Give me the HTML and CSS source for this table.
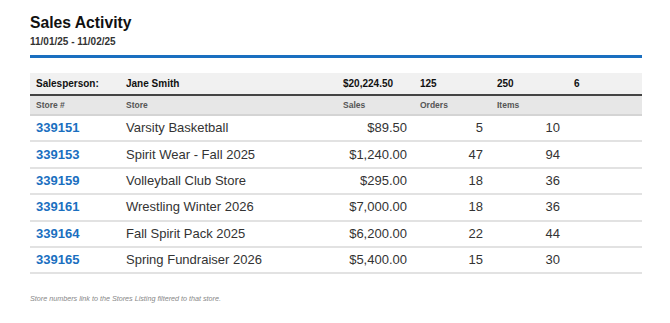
FILE: index.html
```html
<!DOCTYPE html>
<html lang="en">
<head>
<meta charset="utf-8">
<title>Sales Activity</title>
<link rel="stylesheet" href="styles.css">
</head>
<body>
<div class="page">
  <h1 class="title">Sales Activity</h1>
  <div class="range">11/01/25 - 11/02/25</div>
  <div class="rule"></div>
  <table class="report">
    <colgroup>
      <col class="c-num"><col class="c-store"><col class="c-sales"><col class="c-orders"><col class="c-items"><col class="c-extra">
    </colgroup>
    <thead>
      <tr class="summary">
        <td>Salesperson:</td>
        <td>Jane Smith</td>
        <td>$20,224.50</td>
        <td>125</td>
        <td>250</td>
        <td>6</td>
      </tr>
      <tr class="heads">
        <th>Store #</th>
        <th>Store</th>
        <th>Sales</th>
        <th>Orders</th>
        <th>Items</th>
        <th></th>
      </tr>
    </thead>
    <tbody>
      <tr><td><a href="#">339151</a></td><td>Varsity Basketball</td><td class="r sales">$89.50</td><td class="r">5</td><td class="r">10</td><td></td></tr>
      <tr><td><a href="#">339153</a></td><td>Spirit Wear - Fall 2025</td><td class="r sales">$1,240.00</td><td class="r">47</td><td class="r">94</td><td></td></tr>
      <tr><td><a href="#">339159</a></td><td>Volleyball Club Store</td><td class="r sales">$295.00</td><td class="r">18</td><td class="r">36</td><td></td></tr>
      <tr><td><a href="#">339161</a></td><td>Wrestling Winter 2026</td><td class="r sales">$7,000.00</td><td class="r">18</td><td class="r">36</td><td></td></tr>
      <tr><td><a href="#">339164</a></td><td>Fall Spirit Pack 2025</td><td class="r sales">$6,200.00</td><td class="r">22</td><td class="r">44</td><td></td></tr>
      <tr><td><a href="#">339165</a></td><td>Spring Fundraiser 2026</td><td class="r sales">$5,400.00</td><td class="r">15</td><td class="r">30</td><td></td></tr>
    </tbody>
  </table>
  <p class="note">Store numbers link to the Stores Listing filtered to that store.</p>
</div>
</body>
</html>
```
FILE: styles.css
```css
html, body {
  margin: 0;
  padding: 0;
  background: #fff;
}
body {
  font-family: "Liberation Sans", Arial, sans-serif;
  color: #222;
}
.page {
  padding: 14px 28px 0 30px;
}
.title {
  margin: 0;
  font-size: 15.7px;
  line-height: 18px;
  font-weight: bold;
  color: #111;
}
.range {
  margin-top: 4px;
  font-size: 10px;
  line-height: 12px;
  font-weight: bold;
  color: #333;
}
.rule {
  margin-top: 7px;
  height: 3px;
  background: #1a6fc0;
}
.report {
  margin-top: 15px;
  width: 100%;
  table-layout: fixed;
  border-collapse: separate;
  border-spacing: 0;
}
.c-num { width: 90px; }
.c-store { width: 217px; }
.c-sales { width: 77px; }
.c-orders { width: 77px; }
.c-items { width: 77px; }
.c-extra { width: 74px; }
.report td, .report th {
  padding: 0 6px;
  text-align: left;
  white-space: nowrap;
}
.summary td {
  background: #f1f1f1;
  font-size: 10px;
  line-height: 21px;
  font-weight: bold;
  color: #111;
  border-bottom: 2px solid #444;
}
.heads th {
  background: #e7e7e7;
  font-size: 8.5px;
  line-height: 18px;
  font-weight: bold;
  color: #555;
  border-bottom: 2px solid #d4d4d4;
}
.report tbody td {
  font-size: 13px;
  line-height: 16px;
  padding-top: 4.2px;
  padding-bottom: 4.2px;
  color: #333;
  border-bottom: 2px solid #e2e2e2;
}
.report tbody td.r {
  text-align: right;
  padding-right: 8px;
}
.report tbody td.sales {
  padding-right: 7px;
}
.report a {
  color: #1a6fc0;
  font-weight: bold;
  text-decoration: none;
}
.note {
  margin: 20px 0 0;
  font-size: 7.2px;
  line-height: 9px;
  font-style: italic;
  color: #888;
}
```
